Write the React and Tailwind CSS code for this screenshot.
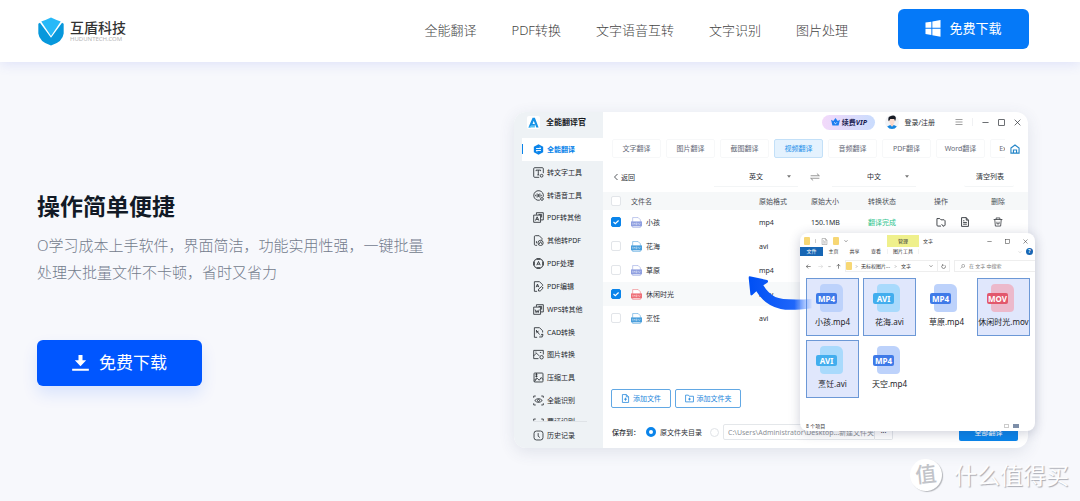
import { useState } from "react";

const NAV = ["全能翻译", "PDF转换", "文字语音互转", "文字识别", "图片处理"];

const TOOLS = [
  { name: "全能翻译", icon: "hex" },
  { name: "转文字工具", icon: "text" },
  { name: "转语音工具", icon: "voice" },
  { name: "PDF转其他", icon: "pdfOut" },
  { name: "其他转PDF", icon: "pdfIn" },
  { name: "PDF处理", icon: "pdfTool" },
  { name: "PDF编辑", icon: "pdfEdit" },
  { name: "WPS转其他", icon: "wps" },
  { name: "CAD转换", icon: "cad" },
  { name: "图片转换", icon: "image" },
  { name: "压缩工具", icon: "zip" },
  { name: "全能识别", icon: "scan" },
];

const TABS = ["文字翻译", "图片翻译", "截图翻译", "视频翻译", "音频翻译", "PDF翻译", "Word翻译", "Excel翻译"];

const ROWS = [
  { name: "小孩", format: "mp4", size: "150.1MB", status: "翻译完成", checked: true, color: "#8f9fe0" },
  { name: "花海", format: "avi", color: "#4a9fdc" },
  { name: "草原", format: "mp4", color: "#8f9fe0" },
  { name: "休闲时光", format: "mov", checked: true, color: "#ee6f77" },
  { name: "烹饪", format: "avi", color: "#4a9fdc" },
];

const FILES = [
  { name: "小孩.mp4", type: "MP4", selected: true },
  { name: "花海.avi", type: "AVI", selected: true },
  { name: "草原.mp4", type: "MP4" },
  { name: "休闲时光.mov", type: "MOV", selected: true },
  { name: "烹饪.avi", type: "AVI", selected: true },
  { name: "天空.mp4", type: "MP4" },
];

const TYPE_STYLE = {
  MP4: { paper: "bg-[#bdd2fb]", label: "bg-[#3f7ae8]" },
  AVI: { paper: "bg-[#a9dafc]", label: "bg-[#42aeee]" },
  MOV: { paper: "bg-[#ecb9cb]", label: "bg-[#e2586c]" },
};

const ICONS = {
  text: (
    <>
      <path d="M9 15H2.500Q1 15 1 13.500V2.500Q1 1 2.500 1H13.500Q15 1 15 2.500V9" />
      <path d="M4.500 6V4.500H11V6M7.700 4.500V11.500M6.300 11.500H9" />
      <circle cx="12.500" cy="12.700" r="2" />
    </>
  ),
  voice: (
    <>
      <path d="M10 14.700A7 7 0 1 1 14.800 10" />
      <path d="M3.800 7V9M6 5V11M8 6V10M10 5V11M12 7V9" />
      <circle cx="13" cy="13" r="2" />
    </>
  ),
  pdfOut: (
    <>
      <path d="M5 4V1H15V11.500H11.500" />
      <path d="M1 4.500H11V15H1ZM3.500 12.500L6 7L8.500 12.500M4.500 10.800H7.500M8 3.500L12.500 3.500V8" />
    </>
  ),
  pdfIn: (
    <>
      <path d="M6 15H3.500Q2 15 2 13.500V2.500Q2 1 3.500 1H9L13 5V7" />
      <circle cx="11" cy="11.500" r="3.800" />
      <path d="M9 13L11 9.700L13 13M5 9V12" />
    </>
  ),
  pdfTool: (
    <>
      <rect x="2" y="2" width="12" height="12" rx="3" />
      <path d="M5.500 10.500L8 5L10.500 10.500M6.500 9H9.500M5 .8H11M5 15.200H11M.8 5V11M15.200 5V11" />
    </>
  ),
  pdfEdit: (
    <>
      <path d="M6 15H2V1H9.500L14 5.500V7M4.500 9L6.500 4.500L8.500 9M5.300 7.500H7.700" />
      <path d="M8 14.500V12L12.500 8L14.800 10.300L10.500 14.500Z" />
    </>
  ),
  wps: (
    <>
      <path d="M5 4V1H15V11.500H11.500M8 3.500H12.500V8" />
      <path d="M1 4.500H11V15H1ZM3 8L4.500 12.500L6 9.500L7.500 12.500L9 8" />
    </>
  ),
  cad: (
    <>
      <path d="M6 15H2V1H9.500L14 5.500V8M5 4.500V7.500M5 5L9.500 11M8 5.500L5 9" />
      <path d="M9 14.500H13.500V10.500M11.500 12L13.500 10L15 12" />
    </>
  ),
  image: (
    <>
      <path d="M8 14H1V2H15V8" />
      <path d="M1 10L5 6L9 10M10 5H12M3.500 4.500H5" />
      <circle cx="12.500" cy="12" r="2.500" />
    </>
  ),
  zip: (
    <>
      <rect x="1.500" y="1.500" width="13" height="13" rx="1" />
      <path d="M5 1.500V8M3.500 4H6.500M3.500 6.500H6.500M2 14L6 9L9 12L12 8L14.500 11M2 12L5 9" />
    </>
  ),
  scan: (
    <>
      <path d="M1 4V1.500H4M12 1.500H15V4M1 12V14.500H4M12 14.500H15V12" />
      <path d="M2.500 8Q8 2.500 13.500 8Q8 13.500 2.500 8Z" />
      <circle cx="8" cy="8" r="1.500" />
    </>
  ),
  history: (
    <>
      <rect x="1.500" y="1.500" width="13" height="13" rx="3.500" />
      <path d="M7.500 4.500V9L10 11" />
    </>
  ),
  addFile: <path d="M9.500 1H2.500V15H13.500V5L9.500 1V5H13.500M8 6.500V12M5.300 9.200H10.700" />,
  addFolder: <path d="M1 2H6L7.500 4H15V14H1ZM8 6.500V11.500M5.500 9H10.500" />,
  folder: <path d="M8 14.500H3Q1.500 14.500 1.500 13V2.500H6L8 4.500H13L14.500 6V13L13 14.500H11M9 11.500L11.500 14.500" />,
  file: <path d="M10 1H2.500V15H13.500V5L10 1V5H13.500M5 6H7M5 8.700H11M5 11.500H11" />,
  trash: <path d="M1 4H15M5 4V1.500H11V4M2.800 4L3.800 14.500H12.200L13.200 4M6.300 7.500V11M9.700 7.500V11M6.300 11H9.700" />,
  home: <path d="M1.500 6.500L8 1.500L14.500 6.500V14.500H1.500ZM5.500 14.500V9.500H10.500V14.500" />,
  menu: <path d="M1 3H15M1 8H15M1 13H15" />,
  minus: <path d="M1 8H15" />,
  square: <rect x="1.500" y="1.500" width="13" height="13" />,
  close: <path d="M1.500 1.500L14.500 14.500M14.500 1.500L1.500 14.500" />,
  back: <path d="M11 2L5 8L11 14" />,
  forward: <path d="M5 2L11 8L5 14" />,
  down: <path d="M2 5L8 11L14 5" />,
  left: <path d="M15 8H1M7 2L1 8L7 14" />,
  right: <path d="M1 8H15M9 2L15 8L9 14" />,
  up: <path d="M8 15V1M2 7L8 1L14 7" />,
  swap: <path d="M1 6H15L11 2.500M15 10H1L5 13.500" />,
  refresh: <path d="M12.500 4A6 6 0 1 1 5 3.500M5 .5V4H8.500" />,
  search: <path d="M1.500 14.500L6 10M15 6A4.700 4.700 0 1 1 5.600 6A4.700 4.700 0 1 1 15 6Z" />,
};

function Icon({ name, className, width = 1.2 }) {
  if (name === "hex") {
    return (
      <svg viewBox="0 0 16 16" className={className} aria-hidden="true">
        <path d="M8 .3L14.800 4V12L8 15.700L1.200 12V4Z" fill="#0a84ea" />
        <path d="M4.500 6.500H11.500L9.700 4.800M11.500 9.500H4.500L6.300 11.200" fill="none" stroke="#fff" strokeWidth="1.400" />
      </svg>
    );
  }
  return (
    <svg viewBox="0 0 16 16" className={className} fill="none" stroke="currentColor" strokeWidth={width} aria-hidden="true">
      {ICONS[name]}
    </svg>
  );
}

function Check({ label, defaultChecked }) {
  return (
    <label className="inline-grid size-[10px] place-items-center align-middle">
      <input
        type="checkbox"
        aria-label={label}
        defaultChecked={defaultChecked}
        className="peer size-[10px] appearance-none rounded-xs border border-[#e2e5e9] bg-white [grid-area:1/1] checked:border-[#0a84ea] checked:bg-[#0a84ea]"
      />
      <svg viewBox="0 0 10 10" className="pointer-events-none hidden size-[10px] [grid-area:1/1] peer-checked:block">
        <path d="M2.500 5L4.300 6.700L7.600 3.500" fill="none" stroke="#fff" strokeWidth="1.200" />
      </svg>
    </label>
  );
}

function Header() {
  return (
    <header className="relative flex h-[62px] items-center bg-white pr-[51px] pl-[38px] shadow-[0_2px_12px_rgba(70,90,230,0.14)]">
      <a href="#" className="flex items-center gap-[6px]">
        <svg viewBox="0 0 80 88" className="h-[29px] w-[26px]" aria-hidden="true">
          <path d="M1 20L6 17L40 63L74 17L79 20V50Q76 76 40 87Q4 76 1 50Z" fill="#0798dc" />
          <path d="M10 13Q26 8 40 1Q54 8 70 13L40 58Z" fill="#27b9f8" />
        </svg>
        <span className="flex flex-col">
          <span className="text-sm leading-4 font-medium text-[#333]">互盾科技</span>
          <span className="text-[6px] leading-[6px] text-[#b5b5b5]">HUDUNTECH.COM</span>
        </span>
      </a>
      <nav className="ml-auto flex gap-[35px] text-[13px] font-light text-[#444]">
        {NAV.map((item) => (
          <a key={item} href="#" className="whitespace-nowrap">
            {item}
          </a>
        ))}
      </nav>
      <button className="mb-[5px] ml-[50px] flex h-10 w-[131px] items-center justify-center gap-2 rounded-md bg-[#0579f8] text-[13px] text-white">
        <svg viewBox="0 0 46 52" className="h-[17px] w-4" fill="#fff" aria-hidden="true">
          <path d="M0 8L18 5V24H0ZM21 4.500L46 0V24H21ZM0 27H18V46L0 43ZM21 27H46V51L21 47Z" />
        </svg>
        免费下载
      </button>
    </header>
  );
}

function Sidebar() {
  return (
    <aside className="flex w-[89px] shrink-0 flex-col rounded-l-xl bg-[#eef2f5] text-[7px] leading-none text-[#25292e]">
      <div className="flex h-5 items-center gap-[6px] pl-[13px]">
        <svg viewBox="0 0 28 28" className="size-[13px] rounded-xs bg-white" aria-hidden="true">
          <path d="M12 4H17L25 25H20L14.500 10L12 17H17V21H9L7.500 25H3Z" fill="#1592e6" />
          <path d="M3 25L8 21H17V25Z" fill="#55c3f5" />
        </svg>
        <span className="text-[8px] font-bold whitespace-nowrap text-[#15181c]">全能翻译官</span>
      </div>
      <ul className="mt-[6px] flex flex-1 flex-col pl-2">
        {TOOLS.map((tool, i) => (
          <li key={tool.name} className={i === 0 ? "flex flex-1 bg-white font-bold text-[#0a84ea]" : "flex flex-1"}>
            <button className="flex flex-1 items-center whitespace-nowrap">
              <span className={i === 0 ? "h-[10px] w-px bg-[#0a84ea]" : "w-px"} />
              <Icon name={tool.icon} className="mr-[3px] ml-[10px] size-[11px]" />
              {tool.name}
            </button>
          </li>
        ))}
      </ul>
      <div className="mr-4 ml-[19px] flex h-[10px] items-start gap-[3px] overflow-hidden border-b border-[#dfe3e7] pt-[6px]">
        <Icon name="scan" className="size-[11px] shrink-0" />
        <span className="whitespace-nowrap">票证识别</span>
      </div>
      <button className="flex h-[26px] items-center gap-[3px] pl-[19px]">
        <Icon name="history" className="size-[11px]" />
        历史记录
      </button>
    </aside>
  );
}

function LangSelect({ label, value }) {
  return (
    <label className="grid h-5 w-[84px] items-center border-b border-[#f3f5f6]">
      <select aria-label={label} className="appearance-none pl-[35px] text-[7px] [grid-area:1/1]">
        <option>{value}</option>
      </select>
      <svg viewBox="0 0 8 5" className="pointer-events-none mr-[7px] h-[3px] w-1 justify-self-end [grid-area:1/1]">
        <path d="M0 0H8L4 5Z" fill="#777" />
      </svg>
    </label>
  );
}

function TranslatorWindow() {
  const [tab, setTab] = useState("视频翻译");

  return (
    <div className="flex h-[336px] rounded-xl bg-white shadow-[0_4px_16px_rgba(60,70,110,0.12)]">
      <Sidebar />
      <main className="flex min-w-0 flex-1 flex-col text-[7px] leading-none text-[#2c3036]">
        <div className="flex h-5 items-center justify-end pr-[7px]">
          <button className="flex h-[15px] w-[53px] items-center justify-center gap-[2px] rounded-full bg-linear-to-r from-[#f3d9fa] to-[#c9dcfd] font-bold whitespace-nowrap text-[#17204f]">
            <svg viewBox="0 0 20 18" className="h-2 w-[9px]" aria-hidden="true">
              <path d="M0 4L5 7L10 0L15 7L20 4L17 17H3Z" fill="#1c7df0" />
              <path d="M7 10L10 13L13 10" fill="none" stroke="#fff" strokeWidth="2" />
            </svg>
            <span>
              续费<i>VIP</i>
            </span>
          </button>
          <svg viewBox="0 0 32 32" className="ml-[10px] size-[14px]" aria-hidden="true">
            <circle cx="16" cy="16" r="16" fill="#f3f4f7" />
            <path d="M5 26Q16 20 27 26Q23 32 16 32Q9 32 5 26Z" fill="#1686e0" />
            <path d="M13 18H19V24Q16 28 13 24Z" fill="#f6cfc0" />
            <ellipse cx="16" cy="14" rx="6" ry="7" fill="#fbdccf" />
            <path d="M8 13Q6 4 12 3Q20 -1 24 4Q26 8 23 14L21 9H12L9 14Z" fill="#161a24" />
          </svg>
          <a href="#" className="ml-[5px] whitespace-nowrap">登录/注册</a>
          <button aria-label="菜单" className="ml-5">
            <Icon name="menu" width={1.4} className="size-2 text-[#777]" />
          </button>
          <span className="mx-[9px] h-2 w-px bg-[#f0f1f3]" />
          <button aria-label="最小化">
            <Icon name="minus" width={1.6} className="size-[7px]" />
          </button>
          <button aria-label="最大化" className="ml-[9px]">
            <Icon name="square" width={1.6} className="size-[7px]" />
          </button>
          <button aria-label="关闭" className="ml-[9px]">
            <Icon name="close" width={1.6} className="size-[7px]" />
          </button>
        </div>

        <div className="mt-[7px] flex items-center pl-[9px]">
          <div className="flex min-w-0 flex-1 gap-[5px] overflow-hidden">
            {TABS.map((item) => (
              <button
                key={item}
                onClick={() => setTab(item)}
                className={
                  item === tab
                    ? "h-[19px] w-[49px] shrink-0 rounded-xs border border-[#c3e0f8] bg-[#e4f2fe] text-[#2591ea]"
                    : "h-[19px] w-[49px] shrink-0 rounded-xs border border-[#f7f8f9] text-[#666a78]"
                }
              >
                {item}
              </button>
            ))}
          </div>
          <button aria-label="首页" className="mr-2 ml-[5px]">
            <Icon name="home" width={1.8} className="size-[10px] text-[#2586c8]" />
          </button>
        </div>

        <div className="mt-[9px] flex h-5 items-center pr-[14px] pl-[9px]">
          <button className="mr-auto flex items-center gap-px">
            <Icon name="back" width={1.6} className="size-2" />
            返回
          </button>
          <LangSelect label="源语言" value="英文" />
          <button aria-label="交换语言" className="mx-3">
            <Icon name="swap" className="size-[10px] text-[#777]" />
          </button>
          <LangSelect label="目标语言" value="中文" />
          <button className="ml-12 h-5 w-[50px] rounded-xs border-b border-[#f3f5f6] pl-[2px]">清空列表</button>
        </div>

        <table className="mt-[5px] w-full table-fixed border-collapse text-left">
          <colgroup>
            <col className="w-[28px]" />
            <col />
            <col className="w-[52px]" />
            <col className="w-[57px]" />
            <col className="w-[66px]" />
            <col className="w-[57px]" />
            <col className="w-[37px]" />
          </colgroup>
          <thead>
            <tr className="h-[18px] bg-[#f6f8f9] text-[#4b5058]">
              <th className="pl-2 font-normal">
                <Check label="全选" />
              </th>
              {["文件名", "原始格式", "原始大小", "转换状态", "操作", "删除"].map((head) => (
                <th key={head} className="font-normal">
                  {head}
                </th>
              ))}
            </tr>
          </thead>
          <tbody>
            {ROWS.map((row) => (
              <tr key={row.name} className={row.name === "休闲时光" ? "h-6 bg-[#f7f9fa]" : "h-6"}>
                <td className="pl-2">
                  <Check label={row.name} defaultChecked={row.checked} />
                </td>
                <td>
                  <span className="flex items-center gap-1">
                    <svg viewBox="0 0 20 20" className="size-[11px]" aria-hidden="true">
                      <path d="M3 1H13L17 5V19H3Z" fill="#fff" stroke={row.color} />
                      <path d="M0 8H20V17H0Z" fill={row.color} />
                      <path d="M3 14V11L5 13L7 11V14M9 11V14H11V11ZM13 11L15 14L17 11" fill="none" stroke="#fff" strokeOpacity=".7" />
                    </svg>
                    {row.name}
                  </span>
                </td>
                <td>{row.format}</td>
                <td>{row.size}</td>
                <td className="text-[#2fc48d]">{row.status}</td>
                <td>
                  {row.status && (
                    <span className="flex gap-[14px] pl-[2px]">
                      <button aria-label="打开文件夹">
                        <Icon name="folder" width={1.4} className="size-[10px]" />
                      </button>
                      <button aria-label="查看文件">
                        <Icon name="file" width={1.4} className="size-[10px]" />
                      </button>
                    </span>
                  )}
                </td>
                <td>
                  {row.status && (
                    <button aria-label="删除" className="ml-[2px] block">
                      <Icon name="trash" className="size-[10px]" />
                    </button>
                  )}
                </td>
              </tr>
            ))}
          </tbody>
        </table>

        <div className="mt-auto flex gap-1 pl-2 text-[#2588dc]">
          <button className="flex h-[19px] w-[60px] items-center justify-center gap-[3px] rounded-xs border border-[#62a8e4]">
            <Icon name="addFile" width={1.4} className="size-[9px]" />
            添加文件
          </button>
          <button className="flex h-[19px] w-[66px] items-center justify-center gap-[3px] rounded-xs border border-[#62a8e4]">
            <Icon name="addFolder" width={1.4} className="size-[9px]" />
            添加文件夹
          </button>
        </div>

        <div className="mt-4 mb-2 flex h-4 items-center pr-[10px] pl-[9px] whitespace-nowrap">
          <span className="w-[34px] font-medium">保存到：</span>
          <label className="flex items-center gap-1">
            <input type="radio" name="target" defaultChecked className="size-[10px] appearance-none rounded-full border-3 border-[#0a84ea] bg-white" />
            原文件夹目录
          </label>
          <input type="radio" name="target" aria-label="自定义目录" className="ml-2 size-[9px] appearance-none rounded-full border border-[#e0e3e7]" />
          <input
            type="text"
            aria-label="保存路径"
            readOnly
            value="C:\Users\Administrator\Desktop...新建文件夹"
            className="ml-1 h-4 w-[152px] rounded-l-xs border border-[#e4e7ea] pl-1 text-[7px] text-[#8c9096]"
          />
          <button aria-label="浏览" className="h-4 w-[18px] rounded-r-xs border border-l-0 border-[#e4e7ea]">···</button>
          <button className="ml-auto h-[18px] w-[59px] rounded-xs bg-[#0a84ea] text-[7px] text-white">全部翻译</button>
        </div>
      </main>
    </div>
  );
}

function FileTile({ file }) {
  const style = TYPE_STYLE[file.type];
  return (
    <button
      className={
        file.selected
          ? "flex h-[58px] flex-col items-center border border-[#6c98d6] bg-[#e0e7fc] pt-[5px]"
          : "flex h-[58px] flex-col items-center border border-transparent pt-[5px]"
      }
    >
      <span className="mr-[6px] grid grid-cols-[4px_17px_6px] grid-rows-[9px_11px_8px]">
        <span className={`col-[2/4] row-[1/4] rounded-sm rounded-tr-md ${style.paper}`} />
        <span className={`col-[1/3] row-[2/3] rounded-xs text-center text-[8px] leading-[11px] font-bold text-white ${style.label}`}>{file.type}</span>
      </span>
      <span className="mt-1 text-[8px] leading-[11px] whitespace-nowrap text-[#202226]">{file.name}</span>
    </button>
  );
}

function FolderMark() {
  return <span className="h-2 w-[6px] rounded-[1px] bg-[#f7d774]" />;
}

function Explorer() {
  return (
    <div className="flex h-[198px] w-[235px] flex-col rounded-lg bg-white text-[5px] leading-none text-[#333] shadow-[0_2px_12px_rgba(40,50,90,0.24)]">
      <div className="flex h-[14px] items-end pr-[7px] pl-1">
        <div className="flex h-3 w-[83px] items-center gap-[5px]">
          <FolderMark />
          <span className="h-1 w-px bg-[#ccc]" />
          <Icon name="file" className="size-[7px] text-[#888]" />
          <FolderMark />
          <Icon name="down" width={2} className="size-1" />
        </div>
        <span className="flex h-3 w-8 items-center justify-center bg-[#eff08c]">管理</span>
        <span className="flex h-3 items-center pl-1">文字</span>
        <div className="ml-auto flex h-3 items-center gap-[13px]">
          <Icon name="minus" width={1.6} className="size-[5px]" />
          <Icon name="square" width={1.6} className="size-[5px]" />
          <Icon name="close" width={1.6} className="size-[5px]" />
        </div>
      </div>
      <div className="flex h-[9px] items-center pr-[2px]">
        <span className="flex h-[9px] w-[23px] items-center justify-center bg-[#1766b4] text-white">文件</span>
        <span className="w-[21px] text-center">主页</span>
        <span className="w-[21px] text-center">共享</span>
        <span className="w-[22px] text-center">查看</span>
        <span className="w-8 border-x border-[#f2f2f2] text-center">图片工具</span>
        <Icon name="down" className="mr-1 ml-auto size-1 text-[#999]" />
        <span className="flex size-[7px] items-center justify-center rounded-full bg-[#1766b4] font-bold text-white">?</span>
      </div>
      <div className="mt-1 flex h-3 items-center pl-[6px]">
        <Icon name="left" width={1.8} className="size-[5px]" />
        <Icon name="right" className="ml-[7px] size-[5px] text-[#bbb]" />
        <Icon name="down" width={2} className="ml-[5px] size-[3px]" />
        <Icon name="up" width={1.8} className="ml-[5px] size-[5px]" />
        <div className="ml-1 flex h-3 w-[105px] items-center border border-[#eee] whitespace-nowrap">
          <FolderMark />
          <Icon name="forward" width={2} className="mx-[3px] size-[3px]" />
          无标权图片...
          <Icon name="forward" width={2} className="mx-1 size-[3px]" />
          文字
          <Icon name="down" width={2} className="mr-1 ml-auto size-1" />
          <span className="flex h-3 w-3 items-center justify-center border-l border-[#eee]">
            <Icon name="refresh" width={1.8} className="size-[5px]" />
          </span>
        </div>
        <label className="ml-1 flex h-3 min-w-0 flex-1 items-center gap-1 border border-r-0 border-[#eee] pl-[5px] text-[#777]">
          <Icon name="search" width={1.8} className="size-[5px] shrink-0" />
          <input type="search" placeholder="在 文字 中搜索" className="w-full min-w-0 text-[5px] placeholder:text-[#777]" />
        </label>
      </div>
      <div className="mt-[6px] mr-[5px] ml-[6px] grid grid-cols-4 gap-1">
        {FILES.map((file) => (
          <FileTile key={file.name} file={file} />
        ))}
      </div>
      <div className="mt-auto flex h-[10px] items-center pr-4 pl-[6px]">
        8 个项目
        <span className="ml-auto h-1 w-[5px] border border-[#ccc]" />
        <span className="ml-1 h-1 w-[6px] bg-[#7d8ea8]" />
      </div>
    </div>
  );
}

function Arrow() {
  return (
    <svg viewBox="0 0 270 180" className="h-[60px] w-[90px]" aria-hidden="true">
      <defs>
        <linearGradient id="tail" gradientUnits="userSpaceOnUse" x1="30" y1="0" x2="220" y2="0">
          <stop offset="0" stopColor="#0050f5" />
          <stop offset=".7" stopColor="#1f66fa" />
          <stop offset="1" stopColor="#4f88ff" stopOpacity="0" />
        </linearGradient>
      </defs>
      <path
        d="M29 34L81 45Q87 48 82 53L70 61Q84 85 106 96Q130 107 215 102V130Q150 138 122 132Q75 122 49 79L37 90Q31 94 31 86L26 38Q26 34 29 34Z"
        fill="url(#tail)"
      />
    </svg>
  );
}

function Watermark() {
  return (
    <div className="absolute right-[11px] bottom-[10px] flex items-center gap-3 text-[#fdfdfe] [text-shadow:1px_1px_1px_#a9abb3]">
      <span className="flex size-8 -rotate-6 items-center justify-center rounded-full bg-white text-[21px] font-medium text-[#c2c4c9] shadow-[1px_1px_1px_#b5b7bc] [text-shadow:none]">
        值
      </span>
      <span className="text-[23px] leading-8">什么值得买</span>
    </div>
  );
}

export default function App() {
  return (
    <div className="relative min-h-screen overflow-hidden bg-[#f7f8fc] font-['Noto_Sans','Noto_Sans_CJK_SC',sans-serif]">
      <Header />
      <section className="flex items-start justify-between pt-[50px] pr-[52px] pb-[53px] pl-[37px]">
        <div className="w-[388px] pt-[78px]">
          <h1 className="text-[23px] leading-8 font-bold text-[#121a26]">操作简单便捷</h1>
          <p className="mt-[10px] text-[15px] leading-[27px] font-light text-[#737b8c]">
            O学习成本上手软件，界面简洁，功能实用性强，一键批量处理大批量文件不卡顿，省时又省力
          </p>
          <button className="mt-[54px] flex h-[46px] w-[165px] items-center justify-center gap-[10px] rounded-md bg-[#0056ff] text-[17px] text-white shadow-[0_8px_16px_rgba(0,86,255,0.12)]">
            <svg viewBox="0 0 50 48" className="h-4 w-[17px]" fill="#fff" aria-hidden="true">
              <path d="M19 0H31V16H42L25 34L8 16H19ZM0 41H50V47H0Z" />
            </svg>
            免费下载
          </button>
        </div>
        <div className="relative w-[514px] shrink-0">
          <TranslatorWindow />
          <div className="absolute top-[121px] -right-[7px]">
            <Explorer />
          </div>
          <div className="pointer-events-none absolute top-[153px] left-[226px]">
            <Arrow />
          </div>
        </div>
      </section>
      <Watermark />
    </div>
  );
}
